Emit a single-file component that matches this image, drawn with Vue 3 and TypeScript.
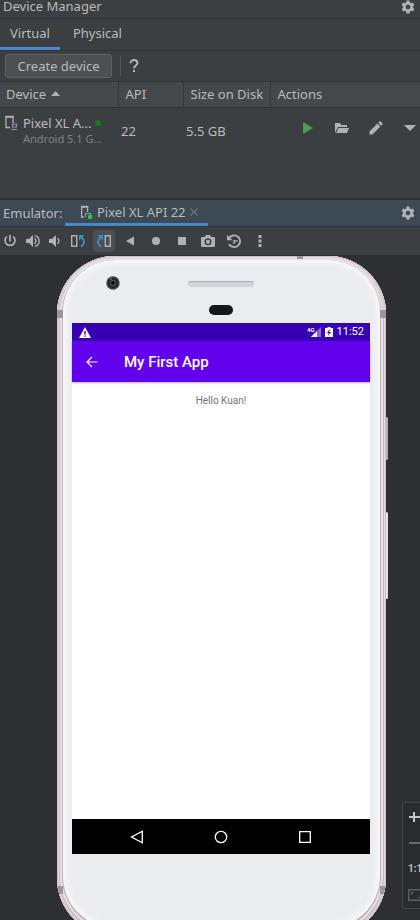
<script setup lang="ts">
import { ref } from 'vue'

interface Device {
  name: string
  os: string
  api: number
  size: string
  online: boolean
}

const tabs: string[] = ['Virtual', 'Physical']
const activeTab = ref<string>('Virtual')
const devices: Device[] = [
  { name: 'Pixel XL A...', os: 'Android 5.1 G...', api: 22, size: '5.5 GB', online: true },
]
</script>

<template>
  <main class="ide">
    <header class="title-bar">
      <h1>Device Manager</h1>
      <button class="icon-btn gear" aria-label="Settings">
        <svg width="14" height="14" viewBox="0 0 24 24"><path fill="#afb1b3" fill-rule="evenodd" d="M9.500 1h5l.7 3.200 2.200 1.200 3-1 2.500 4.300-2.300 2.100v2.400l2.300 2.100-2.500 4.300-3-1-2.200 1.200-.7 3.200h-5l-.7-3.200-2.200-1.200-3 1-2.500-4.300 2.300-2.100v-2.400L1.100 8.700l2.500-4.300 3 1 2.200-1.200zM12 8a4 4 0 1 0 0 8 4 4 0 0 0 0-8z" /></svg>
      </button>
    </header>

    <nav class="tabs">
      <button v-for="tab in tabs" :key="tab" class="tab" :class="{ active: tab === activeTab }" @click="activeTab = tab">{{ tab }}</button>
    </nav>

    <section class="actions-bar">
      <button class="create">Create device</button>
      <span class="divider"></span>
      <button class="help" aria-label="Help">
        <svg width="10" height="14" viewBox="0 0 10 14"><path d="M1.500 4.300C1.500 2.200 2.900 1 5 1s3.500 1.200 3.500 3.100C8.500 6.500 5 6.700 5 9.600" fill="none" stroke="#b4b6b8" stroke-width="1.900" /><rect x="4" y="11" width="2" height="2" fill="#b4b6b8" /></svg>
      </button>
    </section>

    <table class="devices">
      <colgroup><col class="c-device" /><col class="c-api" /><col class="c-size" /><col /></colgroup>
      <thead>
        <tr>
          <th scope="col">Device <svg class="sort" width="9" height="5" viewBox="0 0 9 5"><path d="M0 5 4.500 0 9 5z" fill="#afb1b3" /></svg></th>
          <th scope="col">API</th>
          <th scope="col">Size on Disk</th>
          <th scope="col">Actions</th>
        </tr>
      </thead>
      <tbody>
        <tr v-for="device in devices" :key="device.name">
          <td>
            <div class="device">
              <svg width="14" height="16" viewBox="0 0 14 16"><path d="M5 12.500H1V1.500h7V8" fill="none" stroke="#afb1b3" stroke-width="1.300" /><path d="M.4 1h8.200v1.800H.4z" fill="#afb1b3" /><path d="M7.500 9h4v3h-4zM6 14.500h6" fill="none" stroke="#a284b8" stroke-width="1.200" /></svg>
              <div class="device-text">
                <span class="device-name">{{ device.name }}<i v-if="device.online" class="online"></i></span>
                <span class="device-os">{{ device.os }}</span>
              </div>
            </div>
          </td>
          <td>{{ device.api }}</td>
          <td>{{ device.size }}</td>
          <td class="row-actions-cell">
            <div class="row-actions">
              <button class="icon-btn" aria-label="Run"><svg width="14" height="14" viewBox="0 0 14 14"><path d="M2 1l10 6-10 6z" fill="#499c54" /></svg></button>
              <button class="icon-btn" aria-label="Open folder"><svg width="14" height="14" viewBox="0 0 14 14"><path d="M0 12V2h5l1.500 2H12v2H3z" fill="#afb1b3" /><path d="M3.500 7H14l-2 5H1.200z" fill="#afb1b3" /></svg></button>
              <button class="icon-btn" aria-label="Edit"><svg width="14" height="14" viewBox="0 0 14 14"><path d="M.5 10.500 8.400 2.600l3 3-7.900 7.900h-3zM9.200 1.800l1.100-1.100c.5-.5 1.200-.5 1.700 0l1.300 1.300c.5.5.5 1.200 0 1.700l-1.100 1.100z" fill="#afb1b3" /></svg></button>
              <button class="icon-btn" aria-label="More actions"><svg width="14" height="14" viewBox="0 0 14 14"><path d="M1 4h12L7 10z" fill="#afb1b3" /></svg></button>
            </div>
          </td>
        </tr>
      </tbody>
    </table>

    <section class="emulator-tabs">
      <span class="emulator-label">Emulator:</span>
      <div class="emulator-tab">
        <svg width="14" height="14" viewBox="0 0 14 14"><path d="M5 12.200H2.600V1.500h6V7" fill="none" stroke="#afb1b3" stroke-width="1.300" /><path d="M2 1h7.200v1.800H2z" fill="#afb1b3" /><path d="M6.500 12V8.500h5V10" fill="none" stroke="#8f9396" stroke-width="1.200" /><rect x="9" y="10" width="4" height="4" rx="1" fill="#16d52d" /></svg>
        <span>Pixel XL API 22</span>
        <button class="close" aria-label="Close tab"><svg width="8" height="8" viewBox="0 0 8 8"><path d="M.5.5l7 7M7.500.5l-7 7" stroke="#6e7881" stroke-width="1.100" /></svg></button>
      </div>
      <button class="icon-btn gear" aria-label="Emulator settings">
        <svg width="14" height="14" viewBox="0 0 24 24"><path fill="#afb1b3" fill-rule="evenodd" d="M9.500 1h5l.7 3.200 2.200 1.200 3-1 2.500 4.300-2.300 2.100v2.400l2.300 2.100-2.500 4.300-3-1-2.200 1.200-.7 3.200h-5l-.7-3.200-2.200-1.200-3 1-2.500-4.300 2.300-2.100v-2.400L1.100 8.700l2.500-4.300 3 1 2.200-1.200zM12 8a4 4 0 1 0 0 8 4 4 0 0 0 0-8z" /></svg>
      </button>
    </section>

    <section class="emulator-tools">
      <div class="tools sound">
        <button aria-label="Power"><svg width="14" height="14" viewBox="0 0 14 14"><path d="M6 1v6.500M9.200 2.600a5 5 0 1 1-6.400 0" fill="none" stroke="#afb1b3" stroke-width="1.700" /></svg></button>
        <button aria-label="Volume up"><svg width="14" height="14" viewBox="0 0 14 14"><path d="M0 5h3l4-4v12L3 9H0z" fill="#afb1b3" /><path d="M8.500 4.200a3.500 3.500 0 0 1 0 5.600M9 1.600a5.600 5.600 0 0 1 0 10.800" fill="none" stroke="#afb1b3" stroke-width="1.400" /></svg></button>
        <button aria-label="Volume down"><svg width="14" height="14" viewBox="0 0 14 14"><path d="M1 5h3l4-4v12L4 9H1z" fill="#afb1b3" /><path d="M9.500 4.200a3.500 3.500 0 0 1 0 5.600" fill="none" stroke="#afb1b3" stroke-width="1.400" /></svg></button>
      </div>
      <div class="tools">
        <button aria-label="Rotate left"><svg width="16" height="14" viewBox="0 0 16 14"><path d="M1.700 1.700h5v10.600h-5z" fill="none" stroke="#afb1b3" stroke-width="1.400" /><path d="M11 12.700c3.800-2.700 3.800-6.200.8-9.200" fill="none" stroke="#3592c4" stroke-width="2" /><path d="M9 1h5.500L9 6.500z" fill="#3592c4" /></svg></button>
        <button class="selected" aria-label="Rotate right"><svg width="16" height="14" viewBox="0 0 16 14"><path d="M9.300 1.700h5v10.600h-5z" fill="none" stroke="#afb1b3" stroke-width="1.400" /><path d="M5 12.700C1.200 10 1.200 6.500 4.200 3.500" fill="none" stroke="#3592c4" stroke-width="2" /><path d="M7 1H1.500L7 6.500z" fill="#3592c4" /></svg></button>
        <button aria-label="Back"><svg width="14" height="14" viewBox="0 0 14 14"><path d="M11 2.500v9L3 7z" fill="#afb1b3" /></svg></button>
        <button aria-label="Home"><svg width="14" height="14" viewBox="0 0 14 14"><circle cx="7" cy="7" r="4" fill="#afb1b3" /></svg></button>
        <button aria-label="Overview"><svg width="14" height="14" viewBox="0 0 14 14"><path d="M3 3h8v8H3z" fill="#afb1b3" /></svg></button>
        <button aria-label="Screenshot"><svg width="14" height="14" viewBox="0 0 14 14"><path fill-rule="evenodd" d="M1 3h3l1-2h4l1 2h3a1 1 0 0 1 1 1v8a1 1 0 0 1-1 1H1a1 1 0 0 1-1-1V4a1 1 0 0 1 1-1zm6 1.300a3.500 3.500 0 1 0 0 7 3.500 3.500 0 0 0 0-7z" fill="#afb1b3" /><circle cx="7" cy="7.800" r="2.100" fill="#afb1b3" /></svg></button>
        <button aria-label="Snapshots"><svg width="16" height="14" viewBox="0 0 16 14"><path d="M3 4.200A6 5.800 0 1 1 3 10.200" fill="none" stroke="#afb1b3" stroke-width="1.900" /><path d="M8 10V7h3.500" fill="none" stroke="#afb1b3" stroke-width="1.400" /><path d="M1 .8v5.400h5.600z" fill="#afb1b3" /></svg></button>
        <button aria-label="More"><svg width="14" height="14" viewBox="0 0 14 14"><path d="M5.500 1h3v3h-3zM5.500 5.500h3v3h-3zM5.500 10h3v3h-3z" fill="#afb1b3" /></svg></button>
      </div>
    </section>

    <section class="canvas">
      <div class="phone">
        <i class="side-key power-key"></i>
        <i class="side-key volume-key"></i>
        <div class="face">
          <i class="seam seam-top"></i>
          <i class="seam seam-left"></i>
          <i class="seam seam-right"></i>
          <i class="seam seam-left low"></i>
          <i class="seam seam-right low"></i>
          <div class="forehead">
            <svg class="camera" width="14" height="14" viewBox="0 0 14 14"><circle cx="7" cy="7" r="6.700" fill="#3b3f43" /><circle cx="7" cy="7" r="5" fill="#202428" /><circle cx="7" cy="7" r="3" fill="#555a5c" /><circle cx="7" cy="7" r="2" fill="#080a0b" /><path d="M4 3.500 6 2.500" stroke="#878b8e" /></svg>
            <div class="speaker"></div>
            <span class="sensor"></span>
          </div>
          <div class="screen">
            <div class="status">
              <svg width="12" height="11" viewBox="0 0 12 11"><path fill-rule="evenodd" d="M6 0l6 11H0zM5.300 4v3.500h1.400V4zm0 4.500v1.300h1.400V8.500z" fill="#fff" /></svg>
              <div class="status-right">
                <span class="signal"><small>4G</small><svg width="10" height="10" viewBox="0 0 10 10"><path d="M10 0v10H0z" fill="#8867d3" /><path d="M6 4v6H0z" fill="#fff" /></svg></span>
                <svg width="8" height="10" viewBox="0 0 8 10"><path fill-rule="evenodd" d="M2.500 0h3v1H8v9H0V1h2.500zM4.800 2 2 6h1.700L3 9l3-4H4.300z" fill="#fff" /></svg>
                <time>11:52</time>
              </div>
            </div>
            <div class="app-bar">
              <button aria-label="Navigate up"><svg width="12" height="12" viewBox="0 0 12 12"><path d="M11.500 6H1.200M6 1 1 6l5 5" fill="none" stroke="#fff" stroke-width="1.200" /></svg></button>
              <h2>My First App</h2>
            </div>
            <div class="content">Hello Kuan!</div>
            <div class="nav-bar">
              <button aria-label="Android back"><svg width="14" height="14" viewBox="0 0 14 14"><path d="M12.300 1.300v11.400L1.500 7z" fill="none" stroke="#fff" stroke-width="1.300" /></svg></button>
              <button aria-label="Android home"><svg width="14" height="14" viewBox="0 0 14 14"><circle cx="7" cy="7" r="5.700" fill="none" stroke="#fff" stroke-width="1.300" /></svg></button>
              <button aria-label="Android overview"><svg width="14" height="14" viewBox="0 0 14 14"><path d="M1.700 1.700h10.600v10.600H1.700z" fill="none" stroke="#fff" stroke-width="1.300" /></svg></button>
            </div>
          </div>
        </div>
      </div>
      <div class="zoom">
        <button aria-label="Zoom in"><svg width="14" height="14" viewBox="0 0 14 14"><path d="M1 7h12M6 2v10" stroke="#c2c4c5" stroke-width="2" /></svg></button>
        <button aria-label="Zoom out"><svg width="14" height="14" viewBox="0 0 14 14"><path d="M1 7h12" stroke="#666869" stroke-width="2" /></svg></button>
        <button class="ratio">1:1</button>
        <button aria-label="Zoom to fit"><svg width="16" height="12" viewBox="0 0 16 12"><path d="M.7.7h14.600v10.600H.7z" fill="none" stroke="#5d5f60" stroke-width="1.400" /><path d="M3.500 6V3.500H6M10 8.500h2.500V6" fill="none" stroke="#5d5f60" stroke-width="1.200" /></svg></button>
      </div>
    </section>
  </main>
</template>

<style>
body {
  margin: 0;
  background: #2d2f30;
}
</style>

<style scoped>
.ide {
  display: flex;
  flex-direction: column;
  height: 100vh;
  overflow: hidden;
  background: #3c3f41;
  color: #bbbbbb;
  font: 13px/18px 'Noto Sans', 'Open Sans', sans-serif;
}
.ide * {
  box-sizing: border-box;
}
svg {
  display: block;
  flex: none;
}
button {
  padding: 0;
  border: 0;
  background: none;
  color: inherit;
  font: inherit;
}
h1,
h2 {
  margin: 0;
  font: inherit;
}
.title-bar,
.tabs,
.actions-bar,
.emulator-tabs,
.emulator-tools,
.devices {
  flex: none;
}
.title-bar {
  display: flex;
  align-items: flex-start;
  height: 19px;
  padding: 0 5px 0 3px;
  border-bottom: 1px solid #313335;
}
.title-bar h1 {
  line-height: 12px;
}
.title-bar .gear {
  height: 12px;
}
.gear {
  margin-left: auto;
}
.icon-btn {
  display: grid;
  place-items: center;
}
.tabs {
  display: flex;
  gap: 3px;
  height: 32px;
  border-bottom: 1px solid #313335;
}
.tab {
  padding: 0 10px 1px;
  border-bottom: 3px solid transparent;
}
.tab.active {
  border-color: #4a88c7;
}
.actions-bar {
  display: flex;
  align-items: center;
  height: 31px;
  padding: 0 5px;
  border-bottom: 1px solid #313335;
}
.create {
  width: 107px;
  height: 24px;
  border: 1px solid #5e6062;
  border-radius: 3px;
  background: #4c5052;
}
.divider {
  width: 1px;
  height: 20px;
  margin: 0 8px;
  background: #515355;
}
.devices {
  width: 100%;
  border-collapse: collapse;
  table-layout: fixed;
}
.c-device {
  width: 118px;
}
.c-api {
  width: 65px;
}
.c-size {
  width: 87px;
}
th {
  height: 25px;
  padding: 0 0 0 7px;
  border-bottom: 1px solid #2f3133;
  background: #45484a;
  font-weight: 400;
  text-align: left;
  white-space: nowrap;
}
th:first-child {
  padding-left: 6px;
}
th + th {
  border-left: 1px solid #323537;
}
.sort {
  display: inline-block;
  margin: 0 0 3px 2px;
}
td {
  height: 48px;
  padding: 0 0 0 3px;
}
td:first-child {
  padding: 0;
}
.device {
  display: flex;
  gap: 4px;
  padding: 0 0 0 5px;
}
.device-text {
  display: flex;
  flex-direction: column;
  line-height: 16px;
  white-space: nowrap;
}
.device-name {
  display: flex;
  align-items: center;
  gap: 4px;
}
.device-os {
  color: #7f8283;
  font-size: 11px;
}
.online {
  width: 6px;
  height: 6px;
  border-radius: 50%;
  background: #128012;
}
.row-actions-cell {
  padding: 0;
}
.row-actions {
  display: flex;
  justify-content: flex-end;
  gap: 20px;
  padding: 0 3px 7px 0;
}
.emulator-tabs {
  display: flex;
  align-items: stretch;
  height: 29px;
  margin-top: 43px;
  padding: 0 5px 0 3px;
  border-top: 2px solid #2d2f31;
  border-bottom: 1px solid #323537;
  background: #3d4955;
}
.emulator-label {
  width: 62px;
  line-height: 26px;
}
.emulator-tab {
  display: flex;
  align-items: center;
  width: 143px;
  padding-left: 14px;
  border-bottom: 3px solid #4a88c7;
  white-space: nowrap;
}
.emulator-tab span {
  margin: 2px 4px;
}
.emulator-tools {
  display: flex;
  align-items: center;
  gap: 1px;
  height: 28px;
}
.tools {
  display: flex;
  gap: 4px;
}
.tools.sound {
  gap: 0;
}
.tools button {
  display: grid;
  place-items: center;
  width: 22px;
  height: 22px;
  border-radius: 3px;
}
.tools .selected {
  background: #4c5052;
}
.canvas {
  position: relative;
  flex: 1;
  min-height: 0;
  padding: 1px 34px 0 57px;
  overflow: hidden;
  background: #2d2f30;
}
.phone {
  position: relative;
  height: calc(100% + 16px);
}
.face {
  position: relative;
  display: flex;
  flex-direction: column;
  height: 100%;
  padding: 0 16px 82px 15px;
  overflow: hidden;
  border-radius: 58px;
  background: #ebecee;
  box-shadow:
    inset 0 0 0 1px #c9c1c5,
    inset 0 0 0 2px #e6dde1,
    inset 0 -1px 0 3px #c3bbbf,
    inset 0 -1px 0 5px #e8e0e4,
    inset 0 -2px 0 6px #bcb6b9,
    inset 0 -2px 5px 10px #f6f6fb;
}
.side-key {
  position: absolute;
  right: -2px;
  width: 3px;
  border-radius: 2px;
  background: #b5b1b3;
}
.power-key {
  top: 161px;
  height: 43px;
}
.volume-key {
  top: 256px;
  height: 87px;
  background: #e5e2e4;
}
.seam {
  position: absolute;
  width: 6px;
  height: 8px;
  background: #9a9699;
}
.seam-top {
  top: 0;
  left: 240px;
  height: 3px;
}
.seam-left {
  top: 54px;
  left: 0;
}
.seam-right {
  top: 54px;
  right: 0;
}
.seam.low {
  top: auto;
  bottom: 42px;
}
.forehead {
  display: grid;
  grid-template-columns: 1fr 66px 1fr;
  row-gap: 15px;
  align-content: start;
  flex: none;
  height: 67px;
  padding-top: 20px;
}
.camera {
  margin-left: 34px;
}
.speaker {
  height: 6px;
  margin-top: 5px;
  border-top: 1px solid #a5a7b3;
  border-radius: 3px;
  background: #d3d4dc;
}
.sensor {
  grid-column: 2;
  justify-self: center;
  width: 24px;
  height: 10px;
  border-radius: 5px;
  background: #15191c;
}
.screen {
  display: flex;
  flex: 1;
  flex-direction: column;
  min-height: 0;
  background: #ffffff;
  color: #ffffff;
  font-family: Roboto, sans-serif;
}
.status {
  display: flex;
  align-items: center;
  justify-content: space-between;
  height: 18px;
  padding: 0 6px 0 7px;
  background: #3700b3;
}
.status-right {
  display: flex;
  align-items: center;
  gap: 4px;
  font-size: 11px;
}
.signal {
  display: flex;
  align-items: flex-end;
}
.signal small {
  align-self: flex-start;
  margin-right: -4px;
  font-size: 6px;
  font-weight: 700;
  line-height: 6px;
}
.app-bar {
  z-index: 1;
  display: flex;
  align-items: center;
  gap: 26px;
  height: 41px;
  padding-left: 14px;
  background: #6200ee;
  box-shadow: 0 1px 2px rgba(0, 0, 0, 0.3);
}
.app-bar h2 {
  font-size: 15px;
  font-weight: 500;
}
.content {
  flex: 1;
  padding-top: 10px;
  color: #757575;
  font-size: 10px;
  text-align: center;
}
.nav-bar {
  display: flex;
  align-items: center;
  justify-content: center;
  gap: 70px;
  height: 35px;
  background: #000000;
}
.zoom {
  position: absolute;
  right: -12px;
  bottom: 11px;
  display: flex;
  flex-direction: column;
  gap: 12px;
  height: 107px;
  padding: 7px 7px 7px 5px;
  border: 1px solid #484644;
  border-radius: 3px;
  background: #292b2c;
}
.zoom button {
  height: 14px;
}
.zoom .ratio {
  font-family: Roboto, sans-serif;
  font-size: 10px;
  font-weight: 700;
  line-height: 14px;
  text-align: left;
}
</style>
